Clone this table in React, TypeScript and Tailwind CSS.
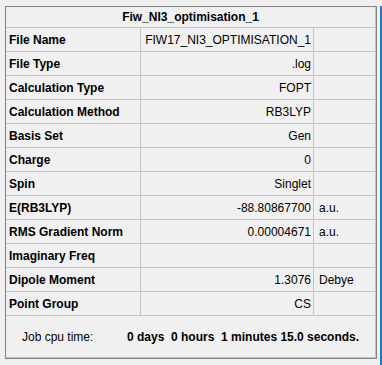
const rows: [string, string, string][] = [
  ['File Name', 'FIW17_NI3_OPTIMISATION_1', ''],
  ['File Type', '.log', ''],
  ['Calculation Type', 'FOPT', ''],
  ['Calculation Method', 'RB3LYP', ''],
  ['Basis Set', 'Gen', ''],
  ['Charge', '0', ''],
  ['Spin', 'Singlet', ''],
  ['E(RB3LYP)', '-88.80867700', 'a.u.'],
  ['RMS Gradient Norm', '0.00004671', 'a.u.'],
  ['Imaginary Freq', '', ''],
  ['Dipole Moment', '1.3076', 'Debye'],
  ['Point Group', 'CS', ''],
]

export default function App() {
  return (
    <div
      className="flex h-[365px] w-[382px] bg-[#f0f0f0] pl-[5px] pt-[6px] text-[12px] leading-none text-black"
      style={{ fontFamily: '"Liberation Sans", Arial, sans-serif' }}
    >
      <div className="flex h-[353px] w-[372px] flex-col border border-[#828282]">
        <div className="flex h-[21px] shrink-0 items-center justify-center border-b border-r border-[#c4c4c4] font-bold">
          Fiw_NI3_optimisation_1
        </div>
        {rows.map(([label, value, unit]) => (
          <div key={label} className="flex h-[24px] shrink-0 border-b border-[#c4c4c4]">
            <div className="flex w-[135px] items-center border-r border-[#c4c4c4] pl-[3px] font-bold">
              {label}
            </div>
            <div className="flex w-[173px] items-center justify-end border-r border-[#c4c4c4] pr-[2px]">
              {value}
            </div>
            <div className="flex w-[62px] items-center border-r border-[#c4c4c4] pl-[5px]">
              {unit}
            </div>
          </div>
        ))}
        <div className="flex flex-1 items-center border-b border-r border-[#c4c4c4] pl-[16px]">
          <span className="w-[105px]">Job cpu time:</span>
          <span className="whitespace-pre font-bold">0 days  0 hours  1 minutes 15.0 seconds.</span>
        </div>
      </div>
      <div className="ml-[3px] w-[2px] bg-[#1a7ad4]" />
    </div>
  )
}
